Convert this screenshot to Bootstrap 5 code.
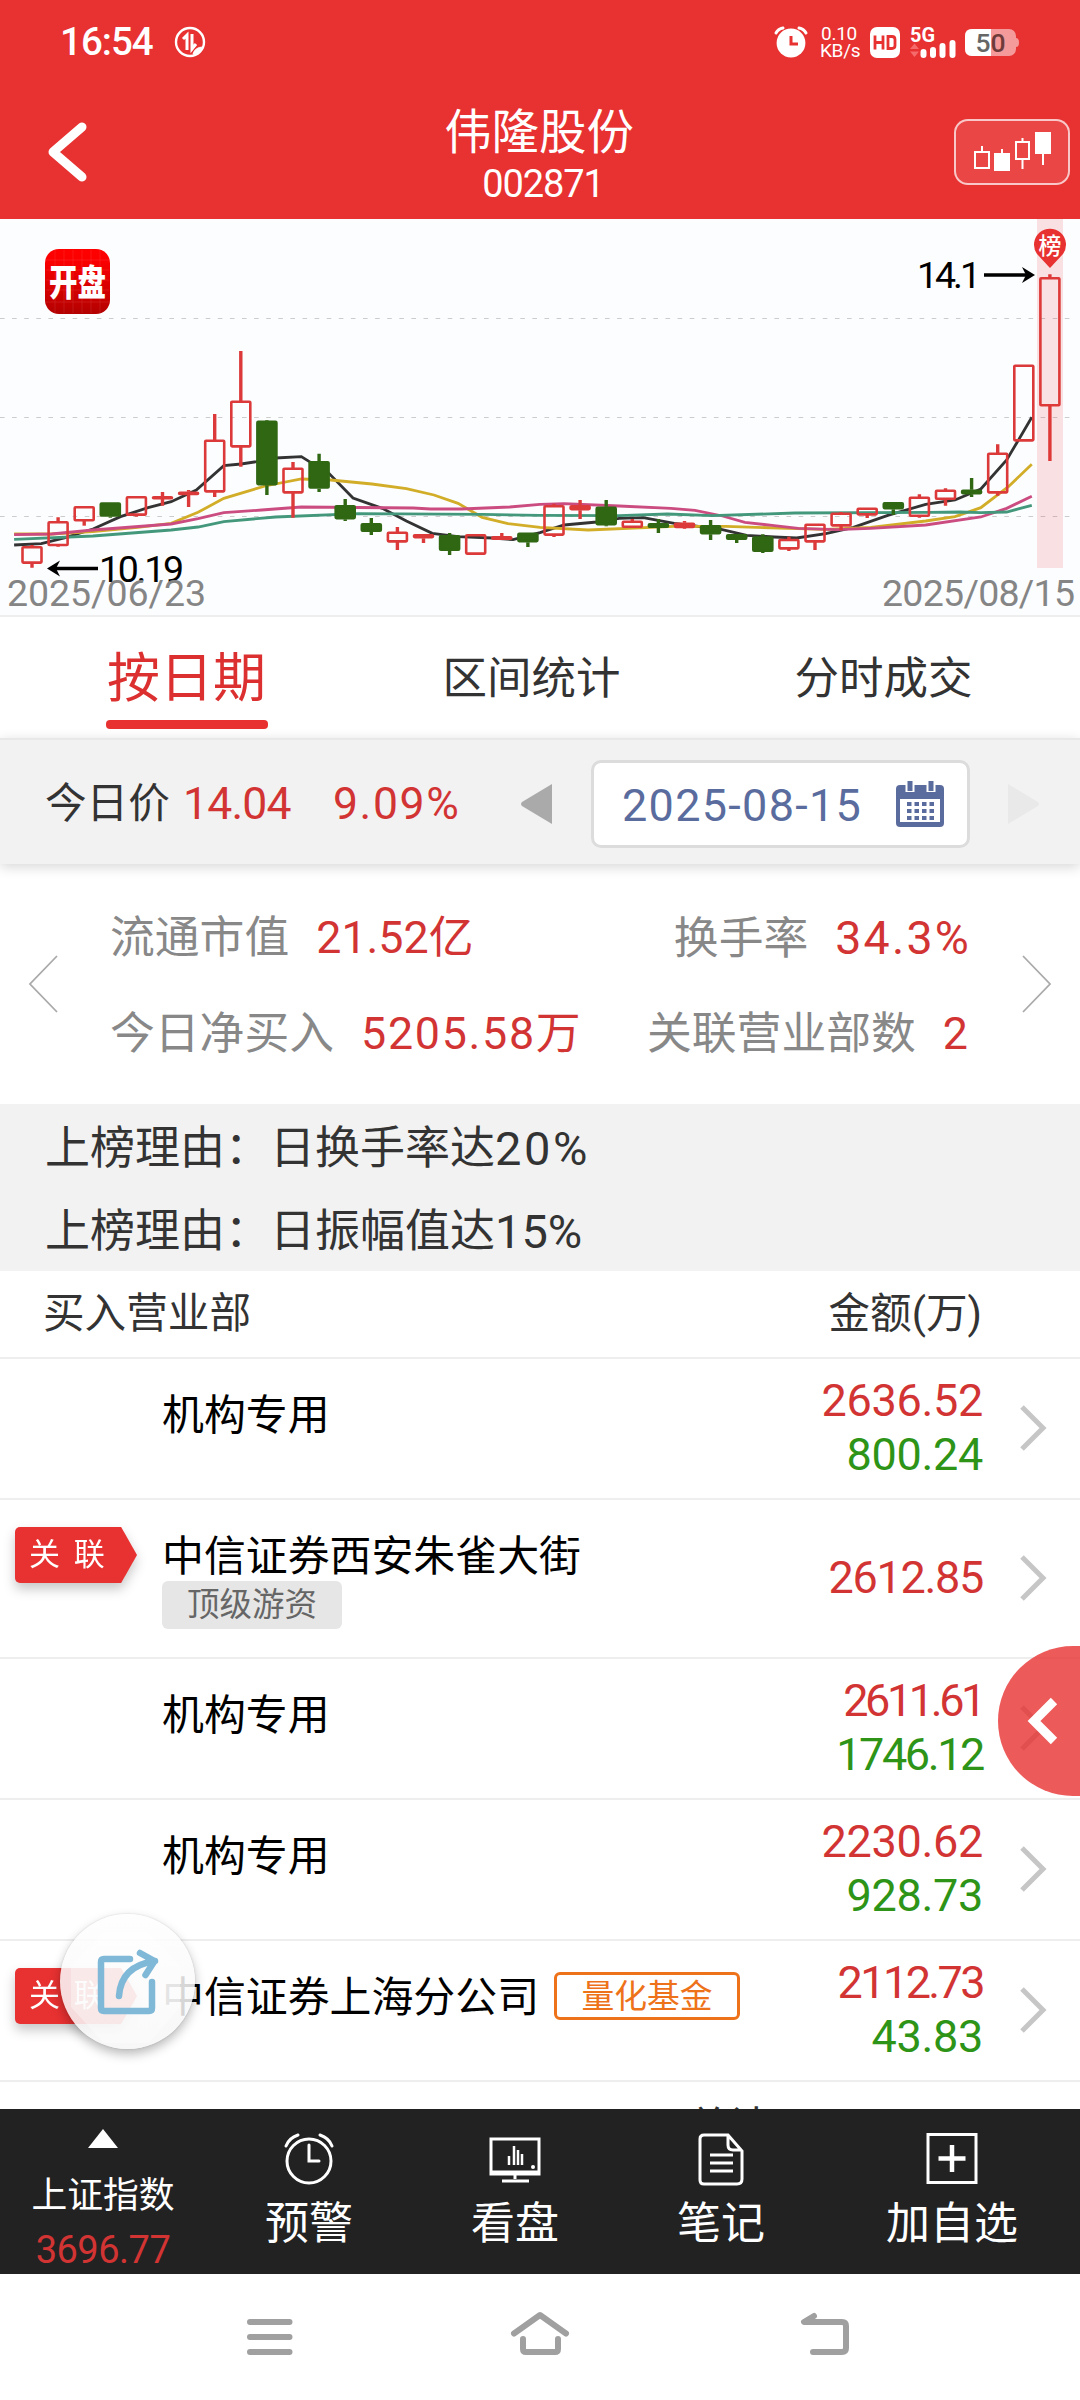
<!DOCTYPE html>
<html lang="zh-CN">
<head>
<meta charset="utf-8">
<meta name="viewport" content="width=device-width, initial-scale=1">
<title>伟隆股份 002871</title>
<link rel="stylesheet" href="https://cdn.jsdelivr.net/npm/bootstrap@5.3.0/dist/css/bootstrap.min.css">
<script src="https://cdn.jsdelivr.net/npm/bootstrap@5.3.0/dist/js/bootstrap.bundle.min.js"></script>
<style>
:root{--brand:#e83131;--up:#d23434;--down:#2d9417}
body{width:1080px;height:2400px;overflow:hidden;background:#fff;color:#333;font-family:Roboto,"Noto Sans CJK SC",sans-serif;line-height:1;white-space:nowrap}
svg{display:block;flex:none;overflow:visible}
.up{color:var(--up)}.down{color:var(--down)}
.status{height:84px;padding:0 61px 0 60px}
.clock{font-size:38.5px;font-weight:500;letter-spacing:-1px;width:95px}
.speed{font-size:19px;line-height:17px;letter-spacing:-.3px;width:38px}
.topbar{background:var(--brand);height:219px}
.titlebar{height:135px;padding:0 10px 0 46px}
.stock{margin-right:38px;padding-top:9px}
.stock-name{font-size:47.4px;line-height:54px}
.stock-code{font-size:38px;line-height:44px;letter-spacing:-1.1px;padding:2px 0 0 8px}
.kbtn{width:116px;height:66px;border:2px solid rgba(255,255,255,.7);border-radius:14px;background:rgba(255,255,255,.1)}
.chart{height:398px;background:#fcfdff;border-bottom:2px solid #eee}
.tabs{height:121px;font-size:44.5px}
.tab-item{position:relative;height:122px;padding-top:2px;padding-right:3px}
.tab-on{font-size:53px;color:#dc3030;padding-right:1px}
.tab-on::after{content:"";position:absolute;left:106px;width:162px;top:103px;height:9px;border-radius:4px;background:var(--brand)}
.datebar{height:126px;background:#f2f2f2;border-top:2px solid #e8e8e8;box-shadow:0 3px 12px rgba(0,0,0,.16);padding:4px 0 0 45px;font-size:44.5px;position:relative}
.datebox{width:379px;height:88px;border:3px solid #dcdcdc;border-radius:10px;background:#fff;color:#5a6c9e;padding:2px 23px 0 28px;font-size:45px;letter-spacing:1.3px}
.stats{height:240px;font-size:44.8px;padding:26px 28px 0}
.stats>svg{margin-top:46px;padding-top:18px}
.stat-grid{height:194px;padding:0 54px 0 52px}
.stat-row{height:96px}
.lbl{color:#888}
.val{margin-left:27px}
.reasons{height:167px;background:#f2f2f2;font-size:45px;padding:3px 0 0 45px}
.reasons b{font-weight:400;font-size:47px;letter-spacing:2.6px}
.reason{height:83px}
.list-head{height:88px;padding:2px 98px 2px 43px;font-size:41.6px;border-bottom:2px solid #eee}
.seat{height:141px;border-bottom:2px solid #eee;padding-left:15px;color:#000;font-size:41.9px}
.seat-tall{height:159px}
.ribbon-col{width:147px;padding-top:27px}
.ribbon{width:122px;height:56px;filter:drop-shadow(0 6px 6px rgba(0,0,0,.22))}
.ribbon span{display:block;height:56px;line-height:56px;padding-left:14px;color:#fff;font-size:31px;word-spacing:6px;background:var(--brand);border-radius:5px 0 0 5px;clip-path:polygon(0 0,87% 0,100% 50%,87% 100%,0 100%)}
.nm{height:50px;margin-top:32px;line-height:50px}
.tag-grey{width:180px;height:48px;background:#e6e6e6;color:#666;border-radius:6px;font-size:32.5px;line-height:49px;text-align:center;margin-top:-1px}
.tag-line{width:186px;height:48px;border:3px solid #ee7219;color:#ee7219;border-radius:6px;font-size:32.8px;line-height:45px;text-align:center;margin:-4px 0 0 15px}
.amt{font-size:45px;line-height:54px;text-align:right;letter-spacing:-.3px;padding-bottom:2px}
.tight{letter-spacing:-3.4px}
.chev{width:97px;padding:0 0 2px 37px}
.total{height:27px;overflow:hidden;padding-left:688px;font-size:41px}
.total div{line-height:60px;padding-top:14px}
.tools{height:165px;background:#222;color:#fff;font-size:44px}
.tool{width:206px}
.tool svg{margin-top:22px;height:56px}
.tool-label{margin-top:15px}
.sysnav{height:126px;background:#fff}
.drawer{position:absolute;left:998px;top:1646px;width:82px;height:150px;border-radius:75px 0 0 75px;background:rgba(232,49,49,.8)}
.share{position:absolute;left:60px;top:1914px;width:135px;height:135px;border-radius:50%;background:linear-gradient(rgba(254,254,254,.86),rgba(246,246,246,.86));box-shadow:0 5px 11px rgba(0,0,0,.28),0 0 2px rgba(0,0,0,.15)}
</style>
</head>
<body class="position-relative d-flex flex-column">
<header class="topbar text-white">
  <div class="status d-flex align-items-center">
    <span class="clock">16:54</span>
    <svg class="me-auto" style="margin-left:19px" width="32" height="32" viewBox="0 0 32 32" fill="none" stroke="#fff"><circle cx="16" cy="16" r="14" stroke-width="2.4"/><path d="M13 24V9L9 13M18 8v15l4-5" stroke-width="3"/><path d="M19 28q2-7 10-7-2 6-10 7" fill="#fff" stroke-width="1"/></svg>
    <svg width="34" height="32" viewBox="0 0 34 32"><circle cx="17" cy="17" r="14.4" fill="#fff"/><path d="M2 7q2-4 7-5M32 7q-2-4-7-5" stroke="#fff" stroke-width="3" fill="none" stroke-linecap="round"/><path d="M17 10v8h7" fill="none" stroke="#e83131" stroke-width="3"/></svg>
    <div class="speed text-center" style="margin-left:12px">0.10<br>KB/s</div>
    <svg style="margin-left:12px" width="30" height="31" viewBox="0 0 30 31"><rect width="30" height="31" rx="7" fill="#fff"/><path d="M5 8.500v14M13 8.500v14M5 15.500h8M18 9.500v12h4q3 0 3-3v-6q0-3-3-3z" fill="none" stroke="#e83131" stroke-width="2.800"/></svg>
    <svg style="margin-left:10px" width="47" height="32" viewBox="0 0 47 32"><text x="0" y="15.500" font-size="20" font-weight="700" fill="#fff" textLength="25" lengthAdjust="spacingAndGlyphs">5G</text><path d="M0 23l4.500-5.500L9 23zM0 25.500h9L4.500 31z" fill="#f56a6a"/><path d="M13.500 26v3M23 24v5M32.500 20v9M42.500 17v12" stroke="#fff" stroke-width="6" stroke-linecap="round"/></svg>
    <svg style="margin-left:8px" width="54" height="27" viewBox="0 0 54 27"><rect width="51" height="27" rx="7" fill="#f49a9a"/><path d="M7 0h19v27H7q-7 0-7-7V7q0-7 7-7" fill="#fff"/><path d="M51 9q3 0 3 4.500T51 18z" fill="#f49a9a"/><text x="10.500" y="23" font-size="26.500" font-weight="500" fill="#666" textLength="30">5<tspan fill="#6e3a3a">0</tspan></text></svg>
  </div>
  <div class="titlebar d-flex align-items-center justify-content-between">
    <svg width="116" height="66" viewBox="0 0 116 66"><path d="M36 8L7 33l29 25" fill="none" stroke="#fff" stroke-width="9" stroke-linecap="round" stroke-linejoin="round"/></svg>
    <div class="stock text-center"><div class="stock-name">伟隆股份</div><div class="stock-code">002871</div></div>
    <div class="kbtn"><svg width="112" height="62" viewBox="956 120 112 62" fill="none" stroke="#fff" stroke-width="2"><path d="M975 151h14v16h-14zM982 151v-6M1016 141h13v17h-13zM1022.500 141v-4M1022.500 158v10"/><path d="M995 153h14v16h-14zM1002 153v-5M1036 132h14v20h-14zM1043 152v12" fill="#fff"/></svg></div>
  </div>
</header>

<section class="chart"><svg id="kline" width="1080" height="396" viewBox="0 219 1080 396">
  <defs><linearGradient id="lg" x2="0" y2="1"><stop stop-color="#f00"/><stop offset=".2" stop-color="#fa0000"/><stop offset="1" stop-color="#b30000"/></linearGradient></defs>
  <path d="M0 318.500H1074M0 417.500H1074M0 516.500H1074" stroke="#ccc" stroke-dasharray="4.600 7.500" stroke-width="1.200"/>
  <g fill="none" stroke-width="2.800" transform="translate(0 215) scale(.34439 .33333)">
    <polyline vector-effect="non-scaling-stroke" stroke="#333" points="41,990 120,986 190,968 270,942 350,905 430,878 497,860 570,825 650,752 700,747 745,740 800,729 875,725 925,757 955,775 1025,849 1110,880 1180,918 1255,955 1330,965 1430,969 1490,974 1568,953 1638,930 1733,921 1798,910 1868,908 1958,925 2088,942 2168,961 2248,966 2313,969 2398,956 2478,937 2578,901 2688,868 2773,855 2848,822 2923,735 2996,607"/>
    <polyline vector-effect="non-scaling-stroke" stroke="#d2ad28" points="41,957 150,957 270,950 400,937 497,925 575,892 650,850 770,813 875,792 960,795 1080,807 1180,821 1260,840 1330,865 1400,907 1475,926 1568,937 1708,945 1958,934 2108,934 2288,940 2398,943 2528,937 2688,918 2773,905 2848,878 2928,815 2996,748"/>
    <polyline vector-effect="non-scaling-stroke" stroke="#cb4c80" points="41,959 150,957 270,945 497,927 575,911 650,893 760,885 875,876 1200,879 1250,882 1340,882 1480,876 1568,868 1638,866 1798,873 1948,880 2018,886 2098,903 2163,922 2248,932 2318,940 2428,944 2528,940 2688,930 2848,906 2923,880 2996,844"/>
    <polyline vector-effect="non-scaling-stroke" stroke="#43987c" points="41,973 270,963 497,945 575,936 650,920 800,906 1040,896 1400,898 1568,901 1798,902 1938,897 2068,902 2308,894 2698,892 2788,891 2848,893 2923,891 2996,871"/>
  </g>
  <g id="candles"></g>
  <rect x="1037" y="219" width="26" height="349" fill="#e83131" opacity=".14"/>
  <path d="M1050 268L1037 254A16 16 0 1 1 1063 254Z" fill="#e83131"/>
  <text x="1050" y="254" font-size="23" font-weight="500" fill="#fff" text-anchor="middle">榜</text>
  <g fill="#000" font-size="37.500"><text x="917" y="288" textLength="64">14.1</text><text x="99" y="582" textLength="85">10.19</text></g>
  <path d="M984 275h46M98 568.500H52" stroke="#000" stroke-width="3.500"/>
  <path d="M1035 275l-13-8 4 8-4 8zM47 568.500l13-8-4 8 4 8z" fill="#000"/>
  <g fill="#858585" font-size="37.500"><text x="7" y="606" textLength="199">2025/06/23</text><text x="882" y="606" textLength="193">2025/08/15</text></g>
  <rect x="45" y="249" width="65" height="65" rx="14" fill="url(#lg)"/>
  <path d="M55 250v63M64 250v63M73 250v63M82 250v63M91 250v63M100 250v63M46 260h63M46 270h63M46 280h63M46 290h63M46 302h63" stroke="#fff" stroke-width=".6" opacity=".15"/>
  <text transform="translate(77.500 296) scale(1 1.260)" font-size="28.500" font-weight="900" fill="#fff" text-anchor="middle">开盘</text>
</svg></section>

<nav class="tabs d-flex">
  <div class="tab-item tab-on d-flex align-items-center justify-content-center" style="width:374px">按日期</div>
  <div class="tab-item d-flex align-items-center justify-content-center" style="width:318px">区间统计</div>
  <div class="tab-item d-flex align-items-center justify-content-center" style="width:386px">分时成交</div>
</nav>

<section class="datebar d-flex align-items-center">
  <span style="font-size:41.600px;width:138px">今日价</span>
  <span class="up" style="width:150px;letter-spacing:-.8px">14.04</span>
  <span class="up" style="width:188px;letter-spacing:1.600px">9.09%</span>
  <svg width="31" height="40" viewBox="0 0 31 40"><path d="M31 0v40L1 22q-2-2 0-4z" fill="#aaa"/></svg>
  <div class="datebox d-flex align-items-center justify-content-between" style="margin-left:39px"><span>2025-08-15</span>
    <svg width="48" height="46" viewBox="0 1 48 46"><rect y="4" width="48" height="42" rx="4" fill="#5a6c9e"/><path d="M4 18h40v23H4z" fill="#fff"/><path d="M14 0v11M35 0v11" stroke="#fff" stroke-width="9"/><path d="M14 0v10M35 0v10" stroke="#5a6c9e" stroke-width="5"/><path d="M11 23h27M11 30h27M11 37h27" stroke="#5a6c9e" stroke-width="4" stroke-dasharray="4.500 3"/></svg></div>
  <svg style="margin-left:38px" width="31" height="40" viewBox="0 0 31 40"><path d="M0 0v40l30-18q2-2 0-4z" fill="#e9e9e9"/></svg>
</section>

<section class="stats d-flex justify-content-between">
  <svg width="30" height="78" viewBox="0 0 30 60"><path d="M29 2L2 30l27 28" fill="none" stroke="#aaa" stroke-width="1.800"/></svg>
  <div class="stat-grid flex-grow-1">
    <div class="stat-row d-flex align-items-center justify-content-between"><div><span class="lbl">流通市值</span><span class="up val">21.52亿</span></div><div><span class="lbl">换手率</span><span class="up val" style="font-size:46.500px;letter-spacing:2.200px;margin-right:-3px">34.3%</span></div></div>
    <div class="stat-row d-flex align-items-center justify-content-between"><div><span class="lbl">今日净买入</span><span class="up val" style="letter-spacing:1.700px">5205.58万</span></div><div><span class="lbl">关联营业部数</span><span class="up val">2</span></div></div>
  </div>
  <svg width="30" height="78" viewBox="0 0 30 60"><path d="M1 2l27 28L1 58" fill="none" stroke="#aaa" stroke-width="1.800"/></svg>
</section>

<section class="reasons">
  <div class="reason d-flex align-items-center">上榜理由：日换手率达<b>20%</b></div>
  <div class="reason d-flex align-items-center">上榜理由：日振幅值达<b style="letter-spacing:0">15%</b></div>
</section>

<section>
  <div class="list-head d-flex align-items-center justify-content-between"><span>买入营业部</span><span>金额(万)</span></div>
  <div class="seat d-flex"><div class="ribbon-col"></div><div class="nm flex-grow-1">机构专用</div><div class="amt align-self-center"><div class="up">2636.52</div><div class="down">800.24</div></div><div class="chev align-self-center"><svg width="27" height="46" viewBox="0 0 27 46"><path d="M2 2l21 21L2 44" fill="none" stroke="#c6c6c6" stroke-width="5"/></svg></div></div>
  <div class="seat seat-tall d-flex"><div class="ribbon-col"><div class="ribbon"><span>关 联</span></div></div><div class="flex-grow-1"><div class="nm">中信证券西安朱雀大街</div><div class="tag-grey">顶级游资</div></div><div class="amt align-self-center"><div class="up" style="letter-spacing:-1.300px">2612.85</div></div><div class="chev align-self-center"><svg width="27" height="46" viewBox="0 0 27 46"><path d="M2 2l21 21L2 44" fill="none" stroke="#c6c6c6" stroke-width="5"/></svg></div></div>
  <div class="seat d-flex"><div class="ribbon-col"></div><div class="nm flex-grow-1">机构专用</div><div class="amt align-self-center"><div class="up tight">2611.61</div><div class="down" style="letter-spacing:-2.400px">1746.12</div></div><div class="chev align-self-center"><svg width="27" height="46" viewBox="0 0 27 46"><path d="M2 2l21 21L2 44" fill="none" stroke="#c6c6c6" stroke-width="5"/></svg></div></div>
  <div class="seat d-flex"><div class="ribbon-col"></div><div class="nm flex-grow-1">机构专用</div><div class="amt align-self-center"><div class="up">2230.62</div><div class="down">928.73</div></div><div class="chev align-self-center"><svg width="27" height="46" viewBox="0 0 27 46"><path d="M2 2l21 21L2 44" fill="none" stroke="#c6c6c6" stroke-width="5"/></svg></div></div>
  <div class="seat d-flex"><div class="ribbon-col"><div class="ribbon"><span>关 联</span></div></div><div class="nm flex-grow-1 d-flex align-items-center">中信证券上海分公司<span class="tag-line">量化基金</span></div><div class="amt align-self-center"><div class="up" style="letter-spacing:-2.600px">2112.73</div><div class="down">43.83</div></div><div class="chev align-self-center"><svg width="27" height="46" viewBox="0 0 27 46"><path d="M2 2l21 21L2 44" fill="none" stroke="#c6c6c6" stroke-width="5"/></svg></div></div>
  <div class="total"><div>总计:<span class="up" style="font-size:45px;margin-left:2px">22427.24</span></div></div>
</section>

<footer class="tools d-flex">
  <div class="tool d-flex flex-column align-items-center"><svg style="margin-top:20px;height:20px" width="30" height="20" viewBox="0 0 30 20"><path d="M15 0l15 19H0z" fill="#fff"/></svg><span style="font-size:35.800px;line-height:50px;margin-top:22px">上证指数</span><span class="up" style="font-size:38px;line-height:50px;margin-top:4px;letter-spacing:-.5px">3696.77</span></div>
  <div class="tool d-flex flex-column align-items-center"><svg width="52" viewBox="0 0 52 56" fill="none" stroke="#fff" stroke-width="3" stroke-linecap="round"><circle cx="26" cy="30" r="22"/><path d="M26 14v16h10M3 15Q6 7 15 4M49 15Q46 7 37 4"/></svg><span class="tool-label">预警</span></div>
  <div class="tool d-flex flex-column align-items-center"><svg width="52" viewBox="0 0 52 56" fill="none" stroke="#fff" stroke-width="3"><path d="M2 8h48v35H2zM26 43v5M13 50h27"/><path d="M2 41h48" stroke-width="3"/><path d="M20 25v9M25 15v19M29 19v15M33 23v11" stroke-width="2.500"/><circle cx="44" cy="36" r="2" fill="#fff" stroke="none"/></svg><span class="tool-label">看盘</span></div>
  <div class="tool d-flex flex-column align-items-center"><svg width="46" viewBox="0 0 46 56" fill="none" stroke="#fff" stroke-width="3"><path d="M6 4h24l14 16v28q0 5-5 5H6q-4 0-4-4V8q0-4 4-4zM30 4v10q0 5 5 5h9M12 24h23M12 32h23M12 40h23"/></svg><span class="tool-label">笔记</span></div>
  <div class="tool d-flex flex-column align-items-center flex-grow-1"><svg width="52" viewBox="0 0 52 56" fill="none" stroke="#fff" stroke-width="3"><path d="M2 3.500h48v48H2z"/><path d="M26 14v27M12.500 27.500h27" stroke-width="4.500"/></svg><span class="tool-label">加自选</span></div>
</footer>

<div class="sysnav"><svg width="1080" height="126" viewBox="0 2274 1080 126" fill="none" stroke="#a0a0a0" stroke-width="6" stroke-linecap="round" stroke-linejoin="round"><path d="M250 2322h39.500M250 2337h39.500M250 2352h39.500M514 2333.500L540 2315l26 18.500M523 2339v10q0 3 3 3h29q3 0 3-3v-10M814 2316l-10 6h38q4 0 4 4v22q0 4-4 4h-29"/></svg></div>

<div class="share"><svg width="135" height="135" viewBox="60 1914 135 135" fill="none" stroke="#80b8d7" stroke-width="6.500" stroke-linecap="round" stroke-linejoin="round"><path d="M103 1933h45l32 32v42l-31 36h-45l-33-36v-42z" fill="#fff" fill-opacity=".35" stroke="none"/><path d="M130 1959h-26q-3 0-3 3v46q0 3 3 3h45q3 0 3-3v-26M119 1996q2-30 36-35M140 1953l14.500 8-9 14"/></svg></div>
<div class="drawer"><svg width="82" height="150" viewBox="998 1646 82 150"><path d="M1054 1701l-20 20 20 20" fill="none" stroke="#fff" stroke-width="9"/></svg></div>

<script>
// kind, open/close top, bottom, high, low (r: hollow, f: filled red, g: filled green)
const bars=[["r",997,1043,990,1058],["r",922,990,907,995],["r",877,916,877,932],["g",862,905,862,908],["r",847,899,847,905],["f",843,852,831,872],["f",830,839,825,876],["r",677,829,597,846],["r",560,694,408,755],["g",617,811,615,840],["r",761,832,741,908],["g",738,821,716,831],["g",870,913,852,918],["g",924,951,909,960],["r",953,979,936,1005],["f",957,970,957,984],["g",960,1008,954,1020],["r",961,1016,961,1016],["f",963,975,954,975],["g",953,982,953,996],["r",874,959,866,966],["f",870,886,855,912],["g",875,931,855,934],["r",920,935,912,935],["g",924,939,912,954],["f",923,939,918,941],["g",930,958,915,975],["g",957,975,957,984],["g",964,1011,958,1014],["r",975,1000,965,1008],["r",929,979,929,1005],["r",896,931,891,945],["r",881,898,881,909],["g",861,883,861,900],["r",848,902,838,908],["r",827,851,820,872],["g",824,838,789,846],["r",716,832,688,842],["r",452,676,452,676],["r",190,571,178,738]];
const Y=v=>(215+v/3).toFixed(1);
document.getElementById("candles").innerHTML=bars.map(([k,t,b,h,l],i)=>{
  const x=32+26.1*i,c=k=="g"?"#2f6713":"#dc3a3a",o=k=="r"?0:1;
  const inset=o?1.200:0;
  return `<path d="M${x} ${Y(h)}V${Y(t)}M${x} ${Y(b)}V${Y(l)}" stroke="${c}" stroke-width="3.400"/><rect x="${x-9.500}" y="${+Y(t)+inset}" width="19" height="${Math.max(1,(b-t)/3-2*inset)}" rx=".8" fill="${o?c:"none"}" stroke="${c}" stroke-width="2.600"/>`;
}).join("");
</script>
</body>
</html>
